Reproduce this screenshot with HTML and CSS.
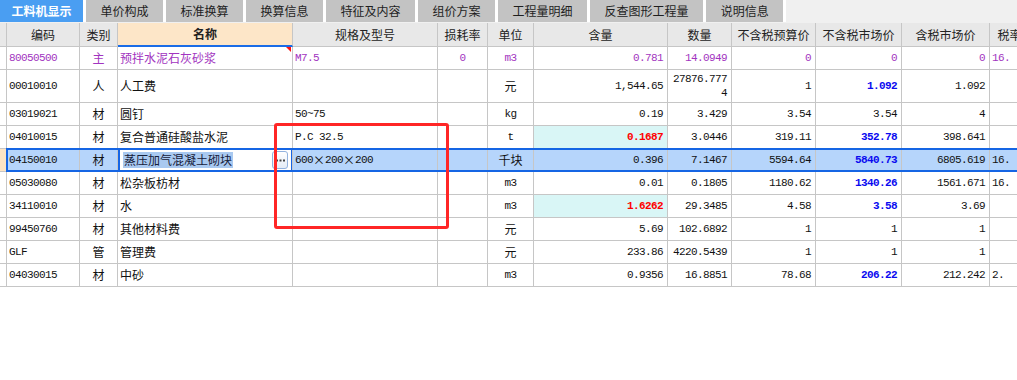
FILE: index.html
```html
<!DOCTYPE html>
<html lang="zh-CN">
<head>
  <meta charset="UTF-8">
  <title>工料机显示</title>
  <link rel="stylesheet" href="styles.css">
</head>
<body>
  <div class="tabs">
    <div class="tab on">工料机显示</div>
    <div class="tab">单价构成</div>
    <div class="tab">标准换算</div>
    <div class="tab">换算信息</div>
    <div class="tab">特征及内容</div>
    <div class="tab">组价方案</div>
    <div class="tab">工程量明细</div>
    <div class="tab">反查图形工程量</div>
    <div class="tab">说明信息</div>
  </div>

  <div class="grid">
    <div class="row head">
      <div class="c"></div>
      <div class="c">编码</div>
      <div class="c">类别</div>
      <div class="c key">名称</div>
      <div class="c">规格及型号</div>
      <div class="c">损耗率</div>
      <div class="c">单位</div>
      <div class="c">含量</div>
      <div class="c">数量</div>
      <div class="c">不含税预算价</div>
      <div class="c">不含税市场价</div>
      <div class="c">含税市场价</div>
      <div class="c">税率</div>
    </div>

    <div class="row main">
      <div class="c"></div>
      <div class="c n">80050500</div>
      <div class="c mid">主</div>
      <div class="c mark">预拌水泥石灰砂浆</div>
      <div class="c n">M7.5</div>
      <div class="c n mid">0</div>
      <div class="c n mid">m3</div>
      <div class="c n r">0.781</div>
      <div class="c n r">14.0949</div>
      <div class="c n r">0</div>
      <div class="c n r">0</div>
      <div class="c n r">0</div>
      <div class="c n">16.</div>
    </div>

    <div class="row">
      <div class="c"></div>
      <div class="c n">00010010</div>
      <div class="c mid">人</div>
      <div class="c">人工费</div>
      <div class="c"></div>
      <div class="c"></div>
      <div class="c mid">元</div>
      <div class="c n r">1,544.65</div>
      <div class="c n r wrap">27876.7774</div>
      <div class="c n r">1</div>
      <div class="c n r blue">1.092</div>
      <div class="c n r">1.092</div>
      <div class="c"></div>
    </div>

    <div class="row">
      <div class="c"></div>
      <div class="c n">03019021</div>
      <div class="c mid">材</div>
      <div class="c">圆钉</div>
      <div class="c n">50~75</div>
      <div class="c"></div>
      <div class="c n mid">kg</div>
      <div class="c n r">0.19</div>
      <div class="c n r">3.429</div>
      <div class="c n r">3.54</div>
      <div class="c n r">3.54</div>
      <div class="c n r">4</div>
      <div class="c"></div>
    </div>

    <div class="row">
      <div class="c"></div>
      <div class="c n">04010015</div>
      <div class="c mid">材</div>
      <div class="c">复合普通硅酸盐水泥</div>
      <div class="c n">P.C 32.5</div>
      <div class="c"></div>
      <div class="c n mid">t</div>
      <div class="c n r hot">0.1687</div>
      <div class="c n r">3.0446</div>
      <div class="c n r">319.11</div>
      <div class="c n r blue">352.78</div>
      <div class="c n r">398.641</div>
      <div class="c"></div>
    </div>

    <div class="row sel">
      <div class="c"></div>
      <div class="c n">04150010</div>
      <div class="c mid">材</div>
      <div class="c ed">
        <span class="hl">蒸压加气混凝土砌块</span>
        <span class="more">
          <svg width="9" height="3" viewBox="0 0 9 3"><rect x="0" y="0.5" width="2" height="2" fill="#444"/><rect x="3.5" y="0.5" width="2" height="2" fill="#444"/><rect x="7" y="0.5" width="2" height="2" fill="#444"/></svg>
        </span>
      </div>
      <div class="c n">600<span class="x">×</span>200<span class="x">×</span>200</div>
      <div class="c"></div>
      <div class="c mid">千块</div>
      <div class="c n r">0.396</div>
      <div class="c n r">7.1467</div>
      <div class="c n r">5594.64</div>
      <div class="c n r blue">5840.73</div>
      <div class="c n r">6805.619</div>
      <div class="c n">16.</div>
    </div>

    <div class="row">
      <div class="c"></div>
      <div class="c n">05030080</div>
      <div class="c mid">材</div>
      <div class="c">松杂板枋材</div>
      <div class="c"></div>
      <div class="c"></div>
      <div class="c n mid">m3</div>
      <div class="c n r">0.01</div>
      <div class="c n r">0.1805</div>
      <div class="c n r">1180.62</div>
      <div class="c n r blue">1340.26</div>
      <div class="c n r">1561.671</div>
      <div class="c n">16.</div>
    </div>

    <div class="row">
      <div class="c"></div>
      <div class="c n">34110010</div>
      <div class="c mid">材</div>
      <div class="c">水</div>
      <div class="c"></div>
      <div class="c"></div>
      <div class="c n mid">m3</div>
      <div class="c n r hot">1.6262</div>
      <div class="c n r">29.3485</div>
      <div class="c n r">4.58</div>
      <div class="c n r blue">3.58</div>
      <div class="c n r">3.69</div>
      <div class="c"></div>
    </div>

    <div class="row">
      <div class="c"></div>
      <div class="c n">99450760</div>
      <div class="c mid">材</div>
      <div class="c">其他材料费</div>
      <div class="c"></div>
      <div class="c"></div>
      <div class="c mid">元</div>
      <div class="c n r">5.69</div>
      <div class="c n r">102.6892</div>
      <div class="c n r">1</div>
      <div class="c n r">1</div>
      <div class="c n r">1</div>
      <div class="c"></div>
    </div>

    <div class="row">
      <div class="c"></div>
      <div class="c n">GLF</div>
      <div class="c mid">管</div>
      <div class="c">管理费</div>
      <div class="c"></div>
      <div class="c"></div>
      <div class="c mid">元</div>
      <div class="c n r">233.86</div>
      <div class="c n r">4220.5439</div>
      <div class="c n r">1</div>
      <div class="c n r">1</div>
      <div class="c n r">1</div>
      <div class="c"></div>
    </div>

    <div class="row">
      <div class="c"></div>
      <div class="c n">04030015</div>
      <div class="c mid">材</div>
      <div class="c">中砂</div>
      <div class="c"></div>
      <div class="c"></div>
      <div class="c n mid">m3</div>
      <div class="c n r">0.9356</div>
      <div class="c n r">16.8851</div>
      <div class="c n r">78.68</div>
      <div class="c n r blue">206.22</div>
      <div class="c n r">212.242</div>
      <div class="c n">2.</div>
    </div>
  </div>

  <!-- 红框标注 -->
  <div class="callout"></div>
</body>
</html>
```

FILE: styles.css
```css
body {
  margin: 0;
  background: #fff;
  color: #111;
  font-family: "Noto Sans CJK SC", sans-serif;
  font-size: 12px;
  overflow: hidden;
}

.tabs {
  display: flex;
  height: 23px;
  background: #f0f0f0;
}
.tab {
  height: 22px;
  line-height: 22px;
  padding: 0 14.5px;
  background: #c3c3c3;
  border-right: 3px solid #fff;
  color: #1e1e1e;
  white-space: nowrap;
}
.tab.on {
  padding: 0 11.5px;
  background: #4a9ef2;
  color: #fff;
  font-weight: bold;
}

.grid {
  width: 1030px;
}
.row {
  display: grid;
  grid-template-columns: 7px 73px 38px 175px 145px 50px 46px 134px 64px 84px 86px 88px 40px;
}
.c {
  box-sizing: border-box;
  min-height: 23px;
  display: flex;
  align-items: center;
  padding: 2px 2px;
  line-height: 14px;
  border-right: 1px solid #c6c6c6;
  border-bottom: 1px solid #c6c6c6;
  white-space: nowrap;
  overflow: hidden;
}
.n {
  font-family: "Liberation Mono", monospace;
  font-size: 11px;
  letter-spacing: -0.6px;
}
.n .x {
  font-family: "Noto Sans CJK SC", sans-serif;
  font-size: 12px;
  letter-spacing: 0;
}
.mid {
  justify-content: center;
}
.r {
  justify-content: flex-end;
  text-align: right;
  padding-right: 4px;
}
.wrap {
  white-space: normal;
  word-break: break-all;
  padding-left: 4px;
}
.blue {
  color: #0a0af0;
  font-weight: bold;
}
.hot {
  background: #d9f6f6;
  color: #ff0000;
  font-weight: bold;
}

.head .c {
  min-height: 24px;
  background: #e8e8e8;
  justify-content: center;
  color: #222;
}
.head .key {
  background: #fde6c8;
  font-weight: bold;
  border-bottom: 2px solid #1a6ce6;
}

.main .c {
  color: #a234c0;
}
.mark {
  position: relative;
}
.mark::after {
  content: "";
  position: absolute;
  top: 0;
  right: 1px;
  border-top: 5px solid #ff1010;
  border-left: 5px solid transparent;
}

.row.sel {
  position: relative;
}
.sel .c {
  background: #b6d5fb;
}
.sel .c:first-child {
  background: #fde4c4;
}
.sel::after {
  content: "";
  position: absolute;
  left: 6px;
  right: 0;
  top: -1px;
  bottom: 0;
  border: 2px solid #1565e4;
  border-right: 0;
  pointer-events: none;
}
.sel .ed {
  background: #fff;
  justify-content: space-between;
  padding: 0 4px 0 5px;
  box-shadow: inset 2px 0 0 #1565e4, inset -1px 0 0 #1565e4;
}
.hl {
  background: #a9c9f0;
  color: #16203a;
  padding: 1px 1px;
}
.more {
  flex: none;
  box-sizing: border-box;
  width: 16px;
  height: 18px;
  display: flex;
  align-items: center;
  justify-content: center;
  border: 1px solid #92b2de;
  border-radius: 3px;
  background: linear-gradient(#ffffff, #e4ecf7);
}

.callout {
  position: absolute;
  left: 274px;
  top: 123px;
  width: 175px;
  height: 106px;
  box-sizing: border-box;
  border: 3px solid #ff2626;
  border-radius: 3px;
  pointer-events: none;
}
```
